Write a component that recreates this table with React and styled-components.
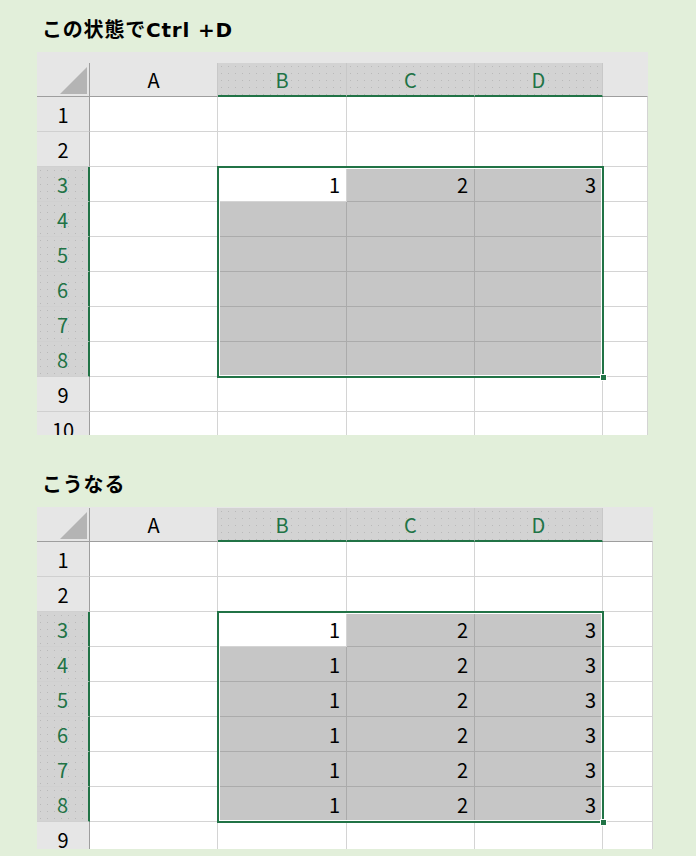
import styled, { createGlobalStyle } from "styled-components";

const GREEN = "#217346";
const COLS = ["A", "B", "C", "D"];

const GlobalStyle = createGlobalStyle`
  body {
    margin: 0;
    background: #e2efda;
    font-family: "Noto Sans CJK JP", "Noto Sans", sans-serif;
  }
`;

const Page = styled.div`
  display: flex;
  flex-direction: column;
  gap: 36px;
  padding: 16px 0 0 37px;
`;

const Section = styled.section`
  display: flex;
  flex-direction: column;
  gap: 8px;
`;

const Title = styled.h2`
  margin: 0 0 0 5px;
  font-family: "DejaVu Sans", "Noto Sans CJK JP", sans-serif;
  font-size: 20px;
  line-height: 28px;
  font-weight: 700;
  letter-spacing: 0.8px;
  color: #000;
`;

const Sheet = styled.div`
  width: ${(p) => p.$width}px;
  height: ${(p) => p.$height}px;
  box-sizing: border-box;
  padding-top: ${(p) => p.$strip}px;
  overflow: hidden;
  background: #e6e6e6;
`;

const Grid = styled.div`
  display: grid;
  grid-template-columns: 53px 128px 129px 128px 128px 1fr;
  grid-template-rows: 34px;
  grid-auto-rows: 35px;
  font-size: 20px;
`;

const dots = `
  background-color: #d3d3d3;
  background-image: radial-gradient(#b9b9b9 0.7px, transparent 0.9px);
  background-size: 7px 7px;
`;

const Corner = styled.div`
  grid-row: 1;
  grid-column: 1;
  display: flex;
  align-items: flex-end;
  justify-content: flex-end;
  padding: 0 2px 2px 0;
  box-sizing: border-box;
  border-right: 1px solid #9e9e9e;
  border-bottom: 1px solid #9e9e9e;
  background: #e6e6e6;
`;

const Triangle = styled.div`
  width: 27px;
  height: 27px;
  background-color: #b4b4b4;
  clip-path: polygon(100% 0, 100% 100%, 0 100%);
`;

const ColHeader = styled.div`
  grid-row: 1;
  grid-column: ${(p) => p.$col};
  display: flex;
  align-items: center;
  justify-content: center;
  box-sizing: border-box;
  border-right: 1px solid ${(p) => (p.$last ? "transparent" : "#c8c8c8")};
  border-bottom: ${(p) => (p.$sel ? `2px solid ${GREEN}` : "1px solid #9e9e9e")};
  color: ${(p) => (p.$sel ? GREEN : "#000")};
  ${(p) => (p.$sel ? dots : "background: #e6e6e6;")}
`;

const RowHeader = styled.div`
  grid-row: ${(p) => p.$row};
  grid-column: 1;
  display: flex;
  align-items: center;
  justify-content: center;
  box-sizing: border-box;
  border-right: ${(p) => (p.$sel ? `2px solid ${GREEN}` : "1px solid #9e9e9e")};
  border-bottom: 1px solid #d0d0d0;
  color: ${(p) => (p.$sel ? GREEN : "#000")};
  ${(p) => (p.$sel ? dots : "background: #e6e6e6;")}
`;

const Cell = styled.div`
  grid-row: ${(p) => p.$row};
  grid-column: ${(p) => p.$col};
  display: flex;
  align-items: center;
  justify-content: flex-end;
  padding-right: 6px;
  box-sizing: border-box;
  background: ${(p) => (p.$sel ? "#c6c6c6" : "#fff")};
  border-right: 1px solid ${(p) => (p.$sel ? "#ababab" : "#d4d4d4")};
  border-bottom: 1px solid ${(p) => (p.$sel ? "#ababab" : "#d4d4d4")};
  color: #000;
`;

const Selection = styled.div`
  grid-row: 4 / 10;
  grid-column: 3 / 6;
  margin: -1px;
  position: relative;
  border: 2px solid ${GREEN};
  box-shadow: inset 0 0 0 1px #fff;
  pointer-events: none;
`;

const Handle = styled.div`
  position: absolute;
  right: -5px;
  bottom: -5px;
  width: 5px;
  height: 5px;
  background: ${GREEN};
  border: 1px solid #fff;
`;

const inSel = (r, c) => r >= 3 && r <= 8 && c >= 1 && c <= 3;

const Spreadsheet = ({ rows, values, width, height, strip }) => (
  <Sheet $width={width} $height={height} $strip={strip}>
    <Grid>
      <Corner>
        <Triangle />
      </Corner>
      {COLS.map((c, i) => (
        <ColHeader key={c} $col={i + 2} $sel={i >= 1}>
          {c}
        </ColHeader>
      ))}
      <ColHeader $col={6} $last />
      {Array.from({ length: rows }, (_, i) => i + 1).map((r) => [
        <RowHeader key={`h${r}`} $row={r + 1} $sel={r >= 3 && r <= 8}>
          {r}
        </RowHeader>,
        ...[0, 1, 2, 3, 4].map((c) => {
          const active = r === 3 && c === 1;
          const v = values[r] && c >= 1 && c <= 3 ? values[r][c - 1] : "";
          return (
            <Cell
              key={`${r}-${c}`}
              $row={r + 1}
              $col={c + 2}
              $sel={inSel(r, c) && !active}
            >
              {v}
            </Cell>
          );
        }),
      ])}
      <Selection>
        <Handle />
      </Selection>
    </Grid>
  </Sheet>
);

const before = { 3: [1, 2, 3] };
const after = {
  3: [1, 2, 3],
  4: [1, 2, 3],
  5: [1, 2, 3],
  6: [1, 2, 3],
  7: [1, 2, 3],
  8: [1, 2, 3],
};

const App = () => (
  <>
    <GlobalStyle />
    <Page>
      <Section>
        <Title>この状態でCtrl +D</Title>
        <Spreadsheet
          rows={10}
          values={before}
          width={611}
          height={383}
          strip={11}
        />
      </Section>
      <Section>
        <Title>こうなる</Title>
        <Spreadsheet
          rows={9}
          values={after}
          width={616}
          height={342}
          strip={1}
        />
      </Section>
    </Page>
  </>
);

export default App;
